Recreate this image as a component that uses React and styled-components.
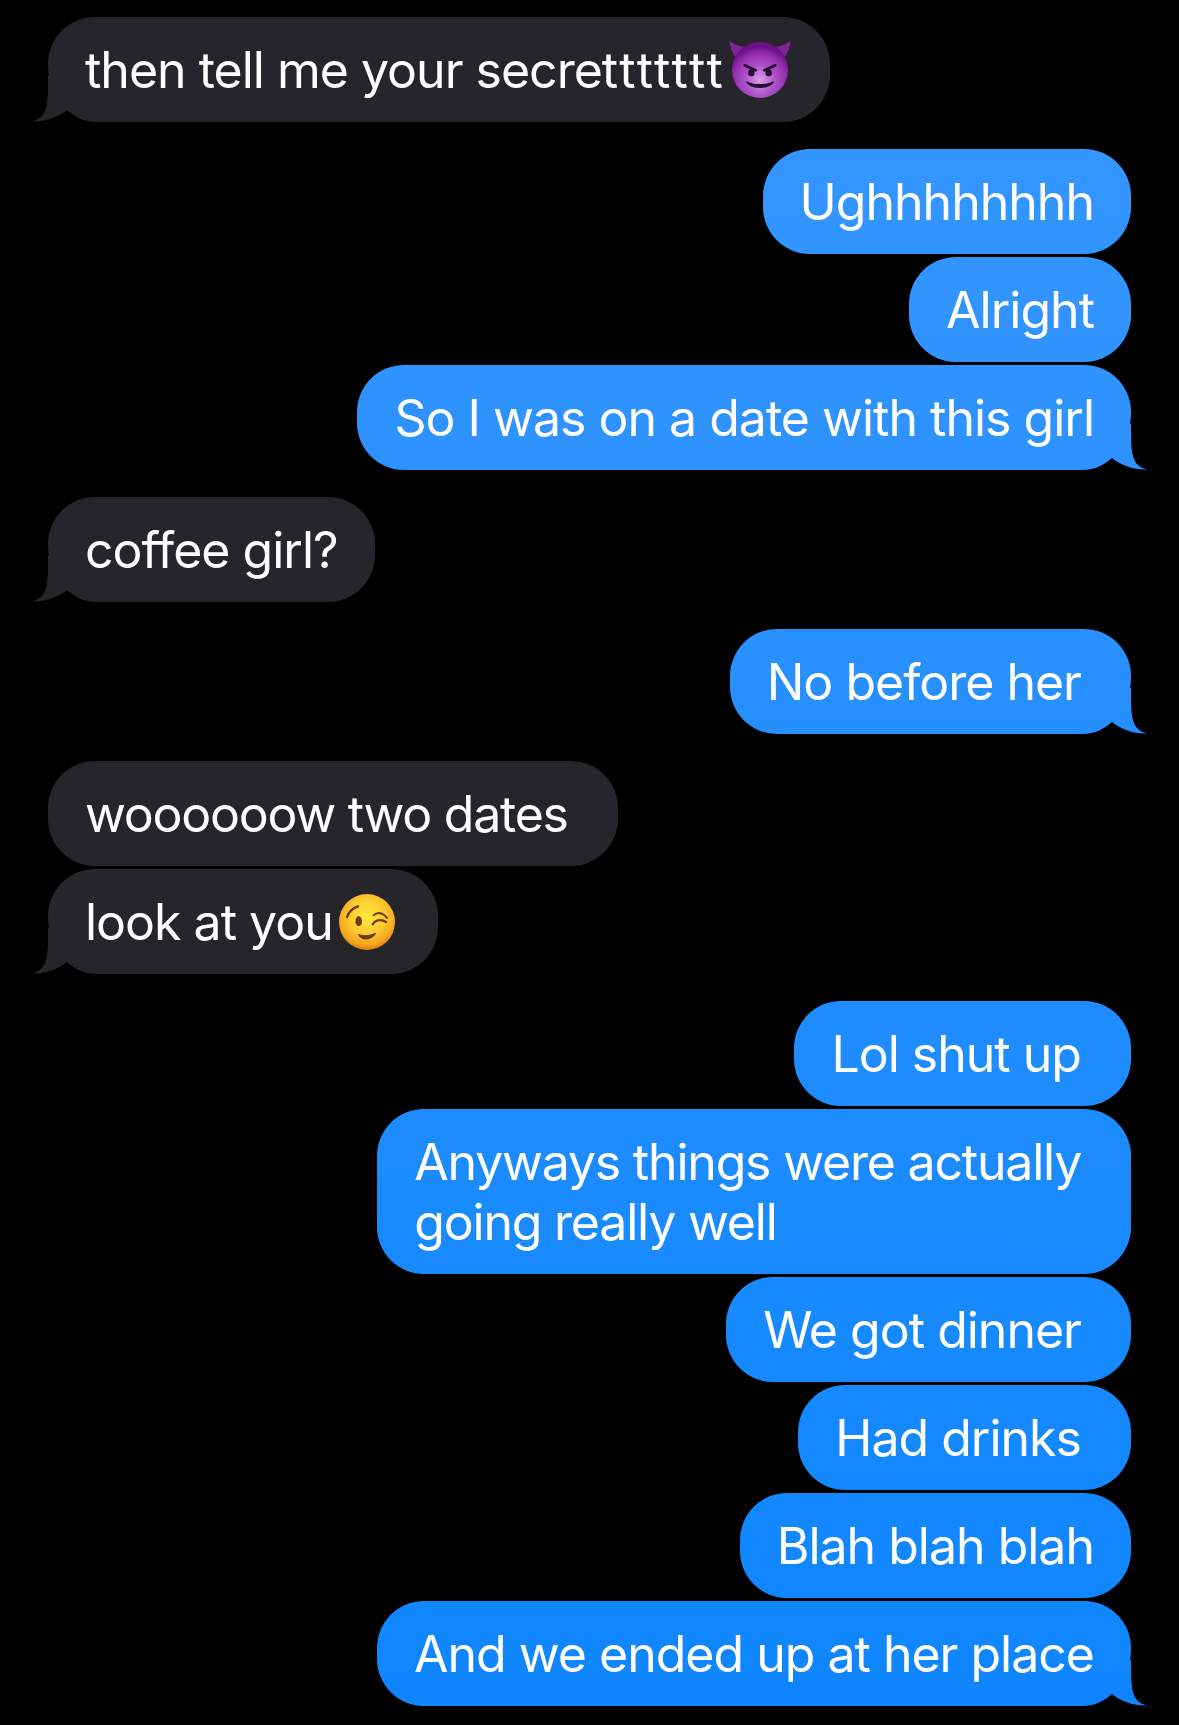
import React from 'react';
import styled, { createGlobalStyle, css } from 'styled-components';

const GlobalStyle = createGlobalStyle`
  html, body {
    margin: 0;
    padding: 0;
    background: #000;
  }
`;

const blueGradient = 'linear-gradient(180deg, #3797ff 0%, #2e92ff 25%, #1a8bff 70%, #0e85ff 100%)';

const Thread = styled.div`
  width: 1179px;
  height: 1725px;
  overflow: hidden;
  box-sizing: border-box;
  padding: 17px 48px 0;
  display: flex;
  flex-direction: column;
  background: #000;
  font-family: Inter, "Liberation Sans", sans-serif;
`;

const Row = styled.div`
  display: flex;
  justify-content: ${props => (props.$mine ? 'flex-end' : 'flex-start')};
  margin-top: ${props => (props.$first ? 0 : props.$grouped ? 3 : 27)}px;
`;

const Bubble = styled.div`
  position: relative;
  box-sizing: border-box;
  padding: 23px 37px 22px;
  border-radius: 47px;
  font-size: 50px;
  line-height: 60px;
  letter-spacing: ${props => props.$tracking || -1}px;
  color: #fff;
  white-space: pre;
  display: flex;
  align-items: center;
  background: ${props => (props.$mine ? blueGradient : '#26252a')};
  background-attachment: ${props => (props.$mine ? 'fixed' : 'scroll')};

  ${props => props.$tail && css`
    border-${props.$mine ? 'bottom-right' : 'bottom-left'}-radius: 49px 57px;

    &::after {
      content: '';
      position: absolute;
      bottom: 0;
      width: 46px;
      height: 46px;
      background: ${props.$mine ? blueGradient : '#26252a'};
      background-attachment: ${props.$mine ? 'fixed' : 'scroll'};
      ${props.$mine ? css`
        right: -16px;
        clip-path: path('M30 0 V9 C30 34 33 42 46 45.5 C34 46 21 42 11 34 L0 20 V0 Z');
      ` : css`
        left: -16px;
        clip-path: path('M16 0 V9 C16 34 13 42 0 45.5 C12 46 25 42 35 34 L46 20 V0 Z');
      `}
    }
  `}
`;

const Lines = styled.span`
  display: block;
`;

// the run of t's sits wider in the reference than in Inter
const Stretched = styled.span`
  letter-spacing: 2.3px;
`;

const EmojiIcon = styled.svg`
  flex: none;
  width: 68px;
  height: 60px;
  display: block;
  overflow: visible;
`;

const DevilEmoji = () => (
  <EmojiIcon viewBox="2 1 68 60">
    <defs>
      <radialGradient id="devilFace" cx="50%" cy="68%" r="60%">
        <stop offset="0%" stopColor="#dc9de6" />
        <stop offset="45%" stopColor="#ad52c8" />
        <stop offset="80%" stopColor="#932cac" />
        <stop offset="100%" stopColor="#6b1086" />
      </radialGradient>
    </defs>
    <path d="M6 1.3 C7 8 9 14 13 19 L24 8 C18 8 11 6 6 1.3 Z" fill="#83209a" />
    <path d="M68 1.3 C67 8 65 14 61 19 L50 8 C56 8 63 6 68 1.3 Z" fill="#83209a" />
    <circle cx="37" cy="31" r="28" fill="url(#devilFace)" />
    <path d="M21.7 26.3 L32.7 31.3 M52.3 26.3 L41.3 31.3" stroke="#2b0d35" strokeWidth="2.6" strokeLinecap="round" />
    <ellipse cx="28.3" cy="33.7" rx="3.2" ry="3.6" fill="#2b0d35" />
    <ellipse cx="45.7" cy="33.7" rx="3.2" ry="3.6" fill="#2b0d35" />
    <path d="M23.7 43 C29 50 45 50 50.3 43 C44 46.5 30 46.5 23.7 43 Z" fill="#2b0d35" stroke="#2b0d35" strokeWidth="1.4" strokeLinejoin="round" />
  </EmojiIcon>
);

const WinkEmoji = () => (
  <EmojiIcon viewBox="3 2 68 60">
    <defs>
      <radialGradient id="winkFace" cx="50%" cy="40%" r="60%">
        <stop offset="0%" stopColor="#ffe93a" />
        <stop offset="55%" stopColor="#fdc92f" />
        <stop offset="85%" stopColor="#f5a51f" />
        <stop offset="100%" stopColor="#dd7f10" />
      </radialGradient>
    </defs>
    <circle cx="37" cy="32" r="28" fill="url(#winkFace)" />
    <path d="M17 27 C19 21 23 18 28 16.3" stroke="#6b3d0a" strokeWidth="2.4" fill="none" strokeLinecap="round" />
    <path d="M43.7 25.3 C47 22 53 22 57 28" stroke="#6b3d0a" strokeWidth="2" fill="none" strokeLinecap="round" />
    <ellipse cx="28.7" cy="31.3" rx="3.3" ry="5" fill="#6b3d0a" />
    <path d="M42.7 34.3 C45 30 51 28.5 56 32" stroke="#6b3d0a" strokeWidth="2.2" fill="none" strokeLinecap="round" />
    <path d="M28.7 44.7 C32 50.5 41 50 45.3 43.7 C40 46 33 46.5 28.7 44.7 Z" fill="#6b3d0a" stroke="#6b3d0a" strokeWidth="1.4" strokeLinejoin="round" />
  </EmojiIcon>
);

const messages = [
  { id: 1, text: 'then tell me your secre', stretched: 'ttttttt', emoji: <DevilEmoji />, tail: true, first: true },
  { id: 2, mine: true, text: 'Ughhhhhhhh' },
  { id: 3, mine: true, grouped: true, text: 'Alright' },
  { id: 4, mine: true, grouped: true, tail: true, text: 'So I was on a date with this girl' },
  { id: 5, tail: true, text: 'coffee girl?' },
  { id: 6, mine: true, tail: true, text: 'No before her ' },
  { id: 7, tracking: -1.25, text: 'woooooow two dates ' },
  { id: 8, grouped: true, tail: true, text: 'look at you', emoji: <WinkEmoji /> },
  { id: 9, mine: true, text: 'Lol shut up ' },
  { id: 10, mine: true, grouped: true, tracking: -1.2, lines: ['Anyways things were actually ', 'going really well'] },
  { id: 11, mine: true, grouped: true, text: 'We got dinner ' },
  { id: 12, mine: true, grouped: true, text: 'Had drinks ' },
  { id: 13, mine: true, grouped: true, text: 'Blah blah blah' },
  { id: 14, mine: true, grouped: true, tail: true, text: 'And we ended up at her place' },
];

const App = () => (
  <>
    <GlobalStyle />
    <Thread>
      {messages.map(m => (
        <Row key={m.id} $mine={m.mine} $grouped={m.grouped} $first={m.first}>
          <Bubble $mine={m.mine} $tail={m.tail} $tracking={m.tracking}>
            {m.lines ? (
              <Lines>
                {m.lines.map(line => <div key={line}>{line}</div>)}
              </Lines>
            ) : (
              <span>{m.text}{m.stretched && <Stretched>{m.stretched}</Stretched>}</span>
            )}
            {m.emoji}
          </Bubble>
        </Row>
      ))}
    </Thread>
  </>
);

export default App;
